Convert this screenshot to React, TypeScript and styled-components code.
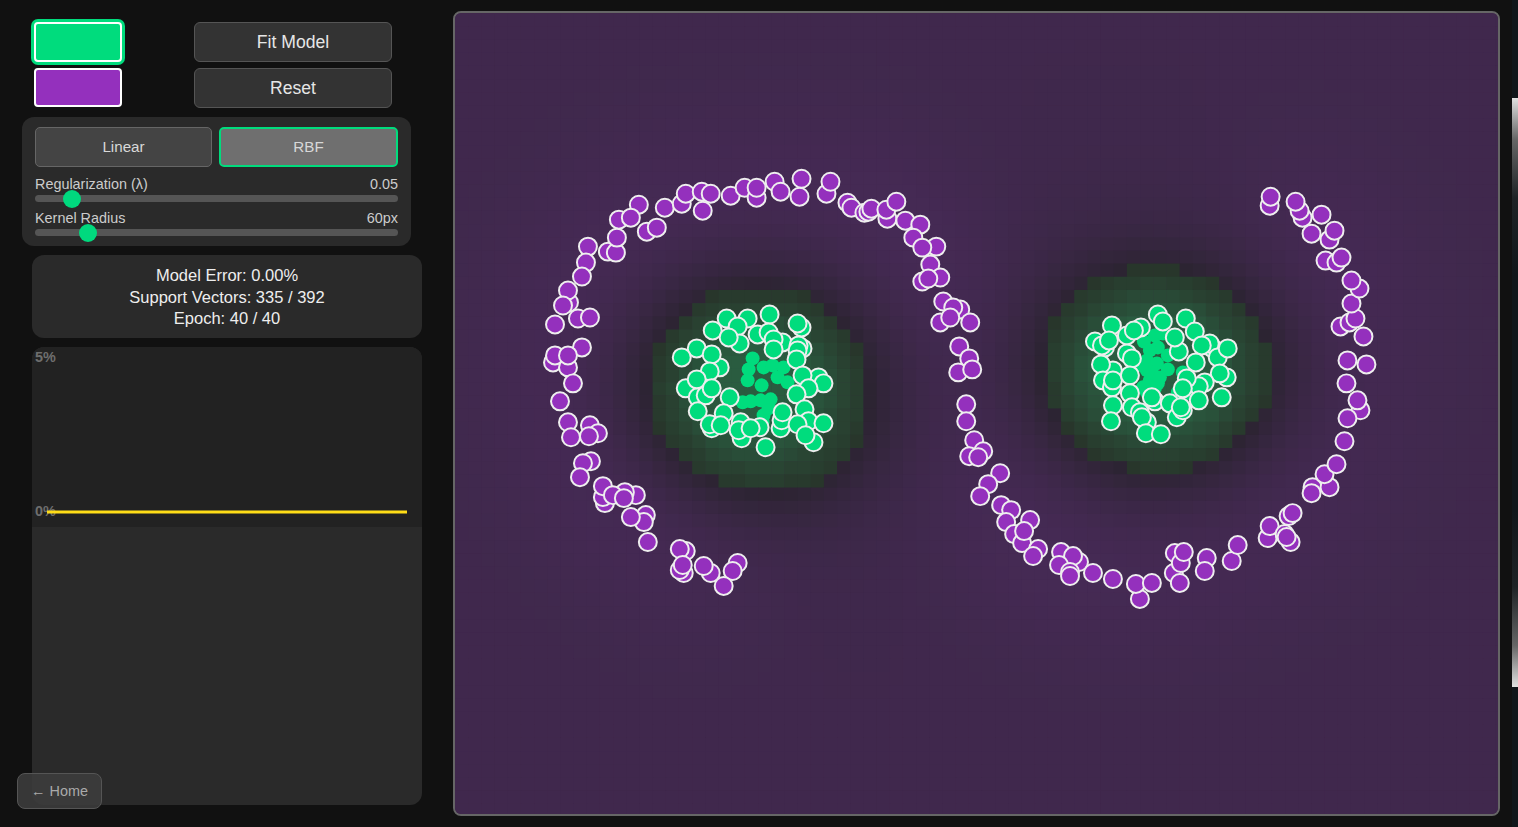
import { useMemo } from "react";
import styled, { createGlobalStyle } from "styled-components";

type Pt = [number, number];

const GlobalStyle = createGlobalStyle`
  html, body { margin: 0; padding: 0; height: 100%; overflow: hidden; background: #111; }
  body { font-family: "Liberation Sans", Arial, sans-serif; color: #eee; }
`;

const CELL = 13.2;
const PLOT_X = 455;
const PLOT_Y = 13;
const PLOT_W = 1044;
const PLOT_H = 801;

const PURPLE: Pt[] = [
  [638,204],[618,219],[630,217],[664,207],[681,203],[685,193],[701,191],[710,193],[702,210],[730,195],[744,187],[756,197],[756,187],[774,181],[780,191],
  [646,231],[656,227],[607,251],[615,252],[616,237],[587,246],[585,262],[581,276],[568,302],[567,290],[562,305],[554,324],[577,318],[589,317],[581,347],
  [552,362],[554,355],[567,367],[567,355],[572,383],[559,401],[567,422],[570,437],[589,425],[597,433],[588,436],[590,461],[582,463],[579,477],[604,503],
  [602,497],[602,486],[635,495],[624,492],[612,495],[623,498],[645,515],[643,522],[630,517],[647,542],[685,551],[679,549],[683,573],[679,570],[682,565],
  [710,573],[703,566],[737,563],[732,571],[723,586],[799,196],[801,178],[826,193],[830,181],[847,202],[851,207],[864,212],[868,211],[871,208],[887,218],
  [886,209],[896,201],[905,220],[920,224],[913,237],[936,246],[922,247],[930,264],[940,277],[922,281],[928,278],[943,301],[960,309],[953,307],[940,322],
  [950,317],[970,322],[959,346],[969,358],[958,372],[972,369],[966,404],[966,421],[974,440],[983,451],[969,456],[978,457],[1000,473],[988,484],[980,496],
  [1001,505],[1011,510],[1030,520],[1006,522],[1014,534],[1022,543],[1024,531],[1038,549],[1033,556],[1061,552],[1079,562],[1073,556],[1059,565],[1070,572],
  [1070,576],[1093,573],[1113,579],[1140,599],[1136,584],[1152,583],[1175,553],[1174,573],[1181,563],[1184,552],[1180,583],[1207,558],[1205,571],[1232,561],
  [1238,545],[1268,538],[1270,526],[1291,542],[1285,534],[1287,537],[1289,516],[1293,513],[1313,487],[1330,487],[1312,493],[1325,474],[1337,464],[1345,441],
  [1361,410],[1348,418],[1358,400],[1347,383],[1348,360],[1367,364],[1364,336],[1341,326],[1350,322],[1356,318],[1352,303],[1360,288],[1352,280],[1326,260],
  [1337,262],[1342,257],[1330,239],[1335,230],[1312,233],[1322,214],[1303,217],[1300,210],[1296,201],[1270,205],[1271,196],
];

const GREEN_SV: Pt[] = [
  [769,314],[801,327],[797,323],[726,318],[747,318],[737,326],[712,330],[739,343],[728,337],[757,334],[768,332],[782,342],[773,339],[773,349],[802,348],[798,345],
  [797,350],[796,359],[696,348],[681,357],[719,367],[711,354],[709,371],[818,377],[802,375],[823,383],[685,388],[697,397],[705,395],[696,379],[711,388],[808,388],
  [796,394],[729,397],[697,411],[723,413],[804,409],[780,428],[781,420],[782,412],[808,421],[823,423],[797,424],[813,442],[805,435],[711,428],[709,424],[720,425],
  [741,438],[740,422],[738,430],[759,427],[750,428],[765,447],
  [1158,314],[1163,321],[1186,318],[1112,325],[1141,327],[1127,335],[1134,330],[1095,341],[1105,347],[1102,345],[1109,340],[1195,331],[1179,351],[1175,337],[1213,348],
  [1210,343],[1202,345],[1218,357],[1228,348],[1127,353],[1132,358],[1196,362],[1113,370],[1101,364],[1103,380],[1112,387],[1113,380],[1130,375],[1227,377],[1220,373],
  [1205,382],[1199,386],[1187,378],[1183,388],[1222,397],[1130,393],[1155,401],[1152,397],[1199,400],[1170,403],[1113,405],[1132,407],[1140,412],[1147,422],[1142,417],
  [1177,417],[1183,410],[1181,407],[1111,421],[1146,433],[1161,434],
];

const GREEN_INNER: Pt[] = [
  [752,358],[748,369],[747,380],[761,385],[763,367],[772,365],[777,377],[787,382],[783,367],[742,402],[750,401],[760,400],[770,399],[763,415],[762,422],[768,408],
  [1144,341],[1155,335],[1163,333],[1158,347],[1147,360],[1147,370],[1157,363],[1168,369],[1150,380],[1143,387],[1158,383],[1183,383],[1187,393],[1152,372],
  [1150,350],[1142,365],[1160,377],[1147,392],[1155,388],[1178,392],[1183,372],[1168,355],
];

const mix = (a: number[], b: number[], t: number): string => {
  const k = Math.max(0, Math.min(1, t));
  return `rgb(${a.map((v, i) => Math.round(v + (b[i] - v) * k)).join(",")})`;
};

const kernel = (x: number, y: number, pts: Pt[], rx: number, ry: number): number =>
  pts.reduce((sum, [px, py]) => sum + Math.exp(-((x - px) ** 2 / (2 * rx * rx) + (y - py) ** 2 / (2 * ry * ry))), 0);

// decision field on a coarse grid, same kernel idea as the model
function buildField() {
  const cols = Math.ceil(PLOT_W / CELL);
  const rows = Math.ceil(PLOT_H / CELL);
  const greens = [...GREEN_SV, ...GREEN_INNER];
  const cells: { x: number; y: number; fill: string }[] = [];
  for (let row = 0; row < rows; row++) {
    for (let col = 0; col < cols; col++) {
      const x = PLOT_X + col * CELL;
      const y = PLOT_Y + row * CELL;
      const cx = x + CELL / 2;
      const cy = y + CELL / 2;
      const gy = cy - (cx < 960 ? 7 : 0);
      const g = kernel(cx, gy, greens, 60, 52) / 38;
      const halo = kernel(cx, gy, greens, 105, 105) / 55;
      const p = kernel(cx, cy, PURPLE, 60, 60) / 26;
      const s = 0.76 + 0.45 * Math.min(p, 1) - 1.8 * g - 0.26 * halo;
      let fill: string;
      if (s >= 0) {
        fill = mix([44, 36, 50], [75, 43, 92], s / 1.2);
      } else {
        fill = mix([40, 54, 43], [42, 92, 64], Math.round(Math.min(-s * 0.75, 1) * 10) / 10);
      }
      cells.push({ x, y, fill });
    }
  }
  return cells;
}

const Page = styled.div`
  display: flex;
  width: 1518px;
  height: 827px;
  background: #111;
  overflow: hidden;
`;

const Sidebar = styled.aside`
  position: relative;
  width: 453px;
  flex: none;
  padding: 22px 0 22px 22px;
  box-sizing: border-box;
  display: flex;
  flex-direction: column;
`;

const TopRow = styled.div`
  display: flex;
  margin-left: 12px;
  width: 358px;
  justify-content: space-between;
`;

const Stack = styled.div<{ $gap: number }>`
  display: flex;
  flex-direction: column;
  gap: ${(p) => p.$gap}px;
`;

const Swatch = styled.button<{ $color: string; $active?: boolean }>`
  display: block;
  width: 88px;
  height: ${(p) => (p.$active ? 40 : 39)}px;
  padding: 0;
  box-sizing: border-box;
  background: ${(p) => p.$color};
  border: 2px solid #fff;
  border-radius: 4px;
  box-shadow: ${(p) => (p.$active ? `0 0 0 3px ${p.$color}` : "none")};
`;

const ActionButton = styled.button`
  width: 198px;
  height: 40px;
  box-sizing: border-box;
  background: #333;
  color: #e6e6e6;
  border: 1px solid #555;
  border-radius: 6px;
  font: 17.6px "Liberation Sans", Arial, sans-serif;
`;

const Controls = styled.section`
  width: 389px;
  height: 129px;
  margin-top: 9px;
  padding: 10px 13px;
  box-sizing: border-box;
  background: #2a2a2a;
  border-radius: 12px;
`;

const ModeRow = styled.div`
  display: flex;
  gap: 7px;
  margin-bottom: 9px;
`;

const ModeButton = styled.button<{ $active?: boolean }>`
  flex: 1 1 0;
  min-width: 0;
  height: 40px;
  padding: 0 0 2px;
  box-sizing: border-box;
  background: ${(p) => (p.$active ? "#6f6f6f" : "#444")};
  color: #d8d8d8;
  border: ${(p) => (p.$active ? "2px solid #00dc7d" : "1px solid #666")};
  border-radius: 5px;
  font: 15.2px "Liberation Sans", Arial, sans-serif;
`;

const SliderHead = styled.div`
  display: flex;
  justify-content: space-between;
  height: 16px;
  font-size: 14.4px;
  line-height: 16px;
  color: #ccc;
`;

const Slider = styled.input`
  display: block;
  appearance: none;
  -webkit-appearance: none;
  width: 100%;
  height: 7px;
  margin: 3px 0 8px;
  background: #555;
  border-radius: 4px;
  outline: none;

  &::-webkit-slider-thumb {
    -webkit-appearance: none;
    width: 18px;
    height: 18px;
    border-radius: 50%;
    background: #00d97e;
    border: none;
  }
`;

const Stats = styled.section`
  width: 390px;
  height: 83px;
  margin: 9px 0 0 10px;
  padding-top: 10px;
  box-sizing: border-box;
  background: #2a2a2a;
  border-radius: 12px;
  text-align: center;
  font-size: 16.5px;
  line-height: 21.5px;
  color: #eee;
`;

const ChartPanel = styled.section`
  width: 390px;
  height: 458px;
  margin: 9px 0 0 10px;
  background: #2a2a2a;
  border-radius: 12px;
  overflow: hidden;
`;

const ChartSvg = styled.svg`
  display: block;
  width: 390px;
  height: 180px;
  background: #222;
`;

const ChartLabel = styled.text`
  font: bold 14.4px "Liberation Sans", Arial, sans-serif;
  fill: #6e6e6e;
`;

const HomeLink = styled.a`
  position: absolute;
  left: 17px;
  top: 773px;
  width: 85px;
  height: 36px;
  box-sizing: border-box;
  display: flex;
  align-items: center;
  justify-content: center;
  background: rgba(60, 60, 60, 0.9);
  border: 1px solid #555;
  border-radius: 8px;
  color: #aaa;
  font-size: 14.4px;
`;

const PlotFrame = styled.main`
  width: 1047px;
  height: 805px;
  margin-top: 11px;
  flex: none;
  box-sizing: border-box;
  border: 2px solid #666;
  border-radius: 8px;
  overflow: hidden;
  background: #40294b;
`;

const PlotSvg = styled.svg`
  display: block;
  width: 100%;
  height: 100%;
`;

const Rail = styled.div`
  width: 6px;
  margin-left: 12px;
  flex: none;
  padding-top: 98px;
  background: #10161a;
`;

const RailThumb = styled.div`
  height: 589px;
  background: linear-gradient(180deg, #e0e0e0 0%, #666 7%, #1e2326 17%, #10161a 30%, #10161a 70%, #1e2326 83%, #666 93%, #e0e0e0 100%);
`;

export default function App(): JSX.Element {
  const cells = useMemo(buildField, []);
  return (
    <Page>
      <GlobalStyle />
      <Sidebar>
        <TopRow>
          <Stack $gap={6}>
            <Swatch $color="#00dc7d" $active aria-label="Class A" />
            <Swatch $color="#9430bd" aria-label="Class B" />
          </Stack>
          <Stack $gap={6}>
            <ActionButton>Fit Model</ActionButton>
            <ActionButton>Reset</ActionButton>
          </Stack>
        </TopRow>
        <Controls>
          <ModeRow>
            <ModeButton>Linear</ModeButton>
            <ModeButton $active>RBF</ModeButton>
          </ModeRow>
          <SliderHead>
            <span>Regularization (λ)</span>
            <span>0.05</span>
          </SliderHead>
          <Slider type="range" min={0.01} max={0.5} step={0.01} defaultValue={0.05} />
          <SliderHead>
            <span>Kernel Radius</span>
            <span>60px</span>
          </SliderHead>
          <Slider type="range" min={10} max={400} step={1} defaultValue={60} />
        </Controls>
        <Stats>
          <div>Model Error: 0.00%</div>
          <div>Support Vectors: 335 / 392</div>
          <div>Epoch: 40 / 40</div>
        </Stats>
        <ChartPanel>
          <ChartSvg viewBox="0 0 390 180">
            <ChartLabel x={3} y={15}>5%</ChartLabel>
            <ChartLabel x={3} y={169}>0%</ChartLabel>
            <line x1={15} y1={165} x2={375} y2={165} stroke="#ffdd17" strokeWidth={3} />
          </ChartSvg>
        </ChartPanel>
        <HomeLink>← Home</HomeLink>
      </Sidebar>
      <PlotFrame>
        <PlotSvg viewBox={`${PLOT_X} ${PLOT_Y} ${PLOT_W + 1} ${PLOT_H + 1}`}>
          {cells.map((c) => (
            <rect key={`${c.x}-${c.y}`} x={c.x} y={c.y} width={CELL + 0.4} height={CELL + 0.4} fill={c.fill} />
          ))}
          <g transform="translate(1.2 0.8)">
            {GREEN_INNER.map(([x, y]) => (
              <circle key={`i${x}-${y}`} cx={x} cy={y} r={7} fill="#00dc7d" />
            ))}
            {GREEN_SV.map(([x, y]) => (
              <circle key={`g${x}-${y}`} cx={x} cy={y} r={9} fill="#00dc7d" stroke="#eee" strokeWidth={2} />
            ))}
            {PURPLE.map(([x, y]) => (
              <circle key={`p${x}-${y}`} cx={x} cy={y} r={9} fill="#9430bd" stroke="#eee" strokeWidth={2} />
            ))}
          </g>
        </PlotSvg>
      </PlotFrame>
      <Rail>
        <RailThumb />
      </Rail>
    </Page>
  );
}
